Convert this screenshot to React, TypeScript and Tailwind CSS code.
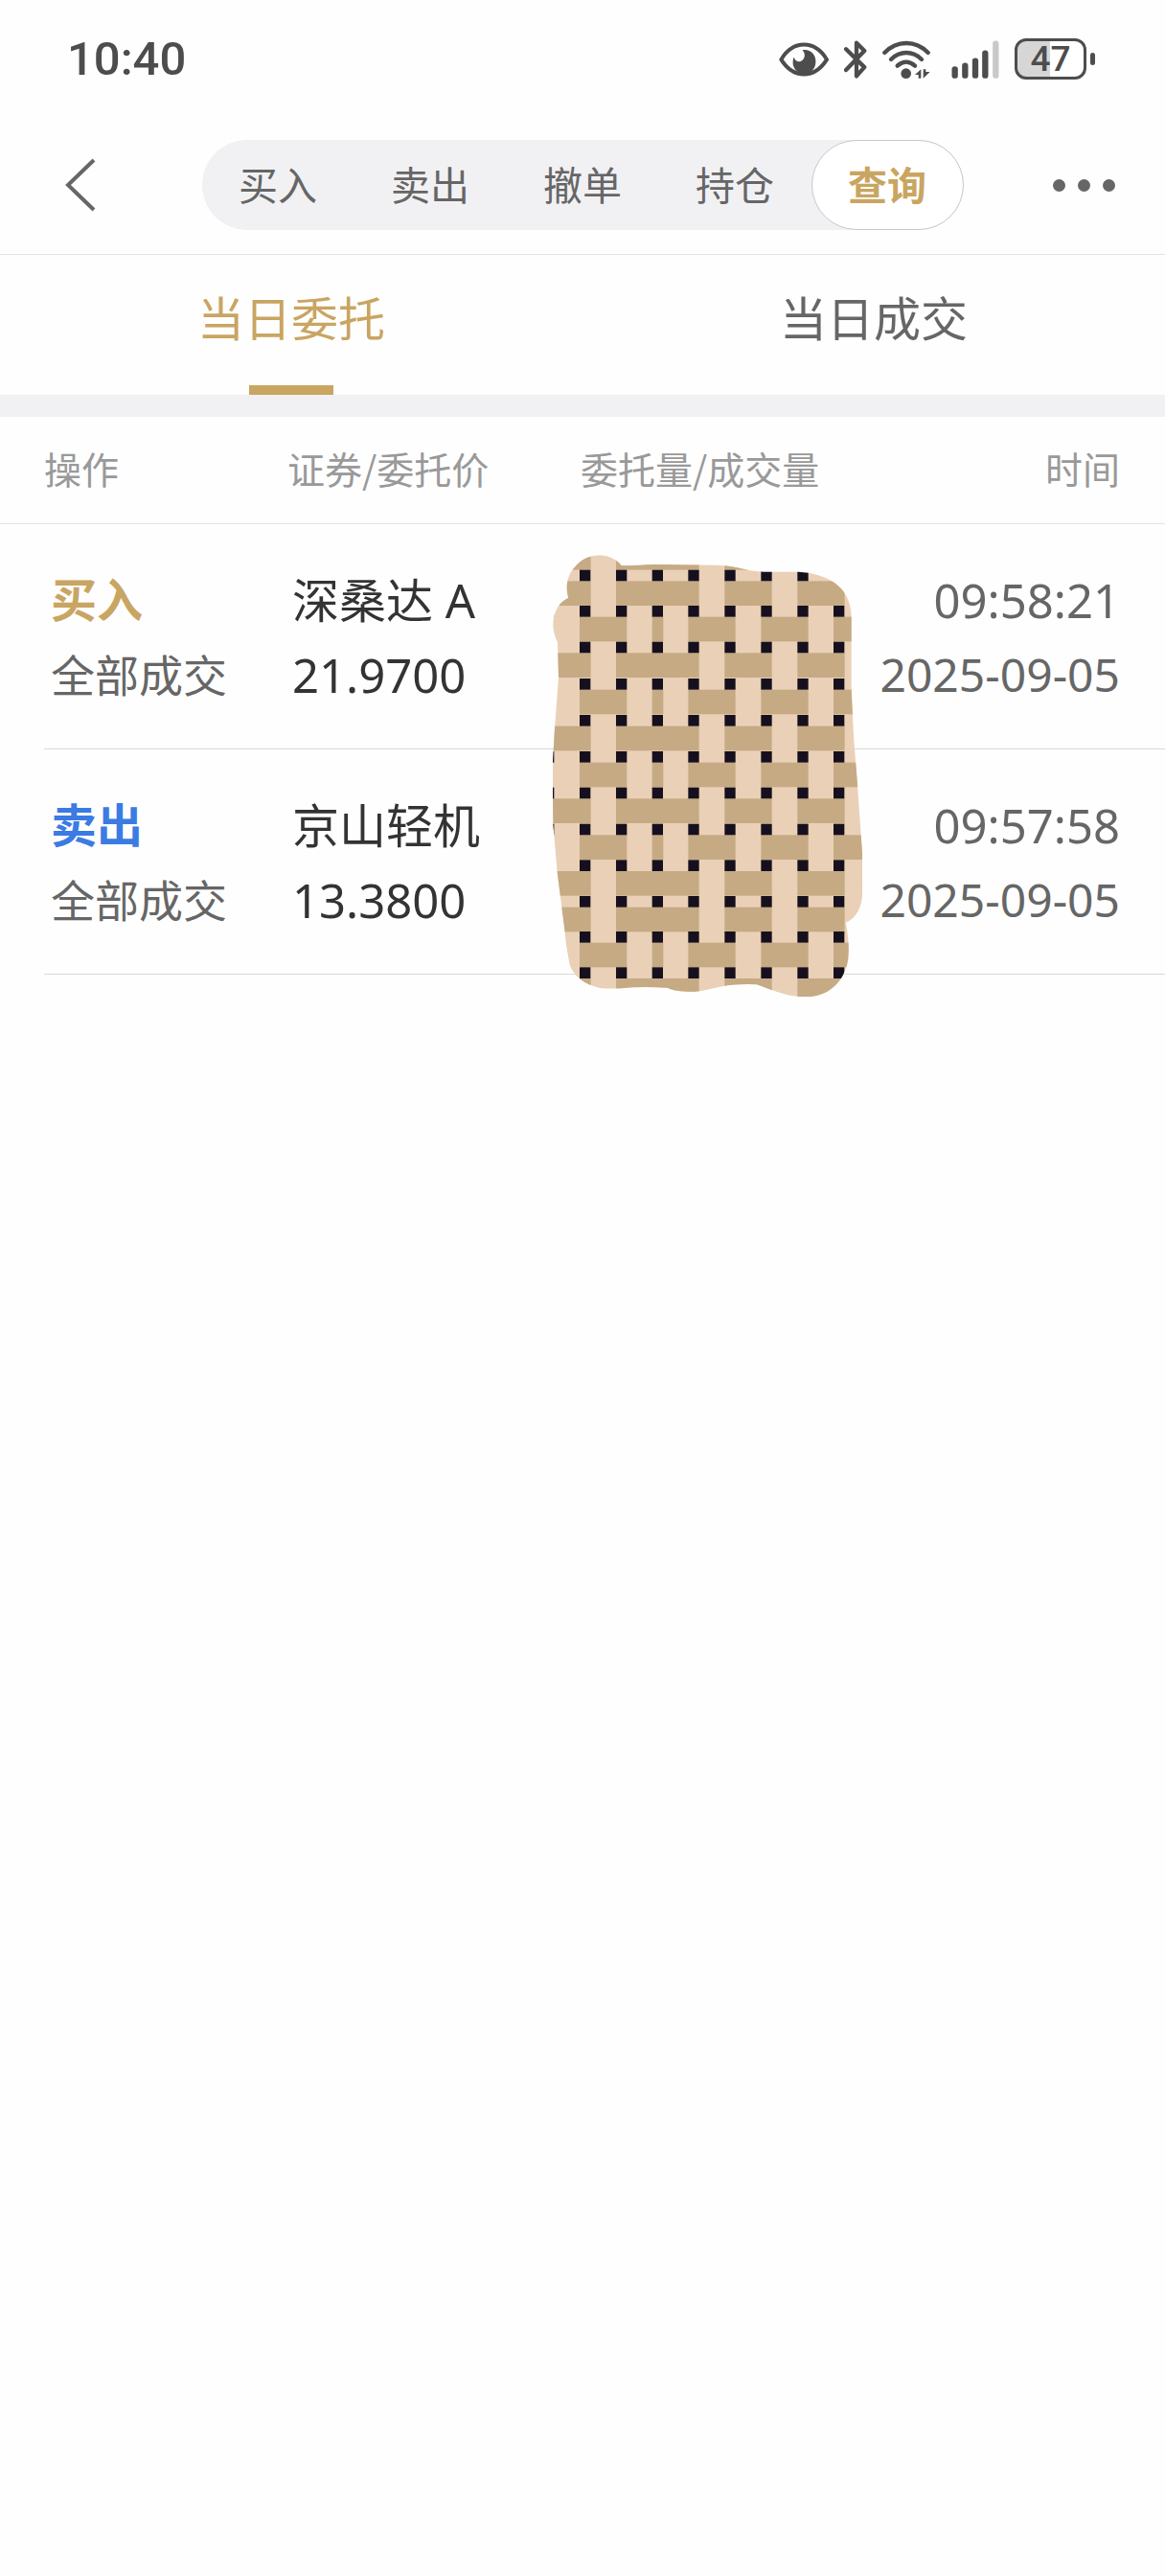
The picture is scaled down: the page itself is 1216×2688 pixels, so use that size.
import React from "react";

const ACTIONS = ["买入", "卖出", "撤单", "持仓", "查询"];

const TABS = ["当日委托", "当日成交"];

const ORDERS = [
  {
    id: 0,
    side: "买入",
    sideColor: "text-[#c9a562]",
    status: "全部成交",
    name: "深桑达 A",
    price: "21.9700",
    time: "09:58:21",
    date: "2025-09-05",
  },
  {
    id: 1,
    side: "卖出",
    sideColor: "text-[#3b7be3]",
    status: "全部成交",
    name: "京山轻机",
    price: "13.3800",
    time: "09:57:58",
    date: "2025-09-05",
  },
];

// y of the horizontal strips, and which of the two weaves each one follows
const STRIPS = [
  { y: 50, even: true },
  { y: 139, even: true },
  { y: 251, even: false },
  { y: 364, even: true },
  { y: 479, even: false },
  { y: 593, even: true },
  { y: 707, even: false },
  { y: 820, even: true },
  { y: 934, even: false },
  { y: 1047, even: true },
  { y: 1160, even: true },
  { y: 1271, even: false },
  { y: 1383, even: true },
];
const EVEN = [[40, 130], [249, 260], [589, 148], [817, 148]];
const ODD = [[135, 148], [362, 35], [475, 148], [703, 148], [930, 148]];
const KNOT_X = [21, 135, 249, 362, 475, 589, 703, 817, 930];

function Weave() {
  return (
    <svg
      className="pointer-events-none absolute left-[-29px] top-[32px] z-10 h-[461px] w-[324px]"
      viewBox="51 57 972 1383"
      aria-hidden="true"
    >
      <clipPath id="weave-edge">
        <path d="M100 192C90 160 95 120 120 95C140 70 170 58 200 58C230 60 255 75 265 90C300 92 330 88 370 87L560 89C630 91 650 108 710 110L820 110C900 114 985 150 986 250L986 480L994 640L1003 750L1020 990L1021 1110C1020 1160 1002 1195 968 1208C974 1230 978 1270 977 1300C978 1380 920 1440 850 1440C790 1444 740 1420 690 1402Q650 1400 600 1404C540 1416 520 1424 490 1424C450 1424 425 1420 410 1412Q350 1409 300 1411Q240 1417 200 1413C150 1404 108 1370 102 1330Q92 1280 88 1230L65 1050L52 900L50 720L57 600L69 440L66 330C50 300 48 270 58 240C66 215 82 200 100 192Z" />
      </clipPath>
      <g clipPath="url(#weave-edge)">
        <rect x="40" y="40" width="1000" height="1420" fill="#ead0b6" />
        {STRIPS.map((strip) =>
          (strip.even ? EVEN : ODD).map(([x, width]) => (
            <rect
              key={`${strip.y}-${x}`}
              x={x}
              y={strip.y}
              width={width}
              height={strip.y === 50 ? 54 : 77}
              fill="#c5aa84"
            />
          ))
        )}
        {STRIPS.slice(1).map((strip) =>
          KNOT_X.map((x) => (
            <rect
              key={`${strip.y}-${x}`}
              x={x}
              y={strip.y - 35}
              width="34"
              height="35"
              fill="#16101e"
            />
          ))
        )}
      </g>
    </svg>
  );
}

function StatusBar() {
  return (
    <div className="flex h-[121px] items-center justify-between pl-[70px] pr-[73px] pt-[2px] text-[#4d4d4d]">
      <span className="font-['Roboto',sans-serif] text-[49px] font-medium leading-none">
        10:40
      </span>
      <div className="flex items-center gap-4">
        <svg className="h-[36px] w-[52px]" viewBox="98 70 157 107" aria-hidden="true">
          <path
            d="M105 124C122 96 146 77 177 77C208 77 232 96 249 124C232 151 208 170 177 170C146 170 122 151 105 124Z"
            fill="none"
            stroke="currentColor"
            strokeWidth="12"
            strokeLinejoin="round"
          />
          <path
            d="M172 94C196 90 214 106 214 130C214 153 198 168 178 168C157 168 142 152 142 133Q142 123 145 117C150 130 160 133 168 129C181 122 183 105 172 94Z"
            fill="currentColor"
          />
        </svg>
        <svg className="h-[40px] w-[24px]" viewBox="303 62 72 121" aria-hidden="true">
          <path
            d="M309 90L367 147L342 175V70L367 95L309 156"
            fill="none"
            stroke="currentColor"
            strokeWidth="13"
            strokeLinecap="round"
            strokeLinejoin="round"
          />
        </svg>
        <svg className="h-[40px] w-[50px]" viewBox="422 62 150 120" aria-hidden="true">
          <g fill="none" stroke="currentColor" strokeWidth="13" strokeLinecap="round">
            <path d="M429 101C468 61 526 61 565 101" />
            <path d="M449 122C477 94 517 94 545 122" />
            <path d="M469 142C486 126 507 126 524 142" />
          </g>
          <circle cx="496" cy="166" r="16" fill="currentColor" />
          <path d="M543 153V181H535V170H524Z" fill="currentColor" />
          <path d="M550 181V153H558V161H571Z" fill="currentColor" />
        </svg>
        <svg className="ml-[6px] h-[40px] w-[50px]" viewBox="641 62 150 120" aria-hidden="true">
          <g stroke="currentColor" strokeWidth="19" strokeLinecap="round">
            <path d="M652 153V172" />
            <path d="M684 142V172" />
            <path d="M716 127V172" />
            <path d="M747 103V172" />
            <path d="M780 73V172" stroke="#c9c9c9" />
          </g>
        </svg>
        <div className="flex items-center gap-1">
          <div className="flex h-[43px] w-[75px] items-center justify-center rounded-xl border-[3px] border-[#4d4d4d] bg-linear-to-r from-[#d6d6d6] from-50% to-white to-50% font-['Roboto',sans-serif] text-[37px] font-medium leading-none">
            47
          </div>
          <div className="h-[13px] w-[5px] rounded-full bg-[#4d4d4d]" />
        </div>
      </div>
    </div>
  );
}

export default function App() {
  return (
    <div className="min-h-screen bg-[#fefefe] font-['Noto_Sans','Noto_Sans_CJK_SC',sans-serif] text-[#666666]">
      <StatusBar />

      <nav className="grid h-[145px] grid-cols-[1fr_auto_1fr] items-center border-b border-[#e2e2e2]">
        <div className="flex pl-[66px]">
          <button type="button" aria-label="返回">
            <svg className="h-[58px] w-[35px]" viewBox="0 0 35 58" aria-hidden="true">
              <path d="M32 3L5 29L32 55" fill="none" stroke="currentColor" strokeWidth="4" />
            </svg>
          </button>
        </div>
        <div className="flex h-[94px] rounded-full bg-[#f1f1f4] font-['Noto_Sans_CJK_SC',sans-serif] text-[41px] leading-none">
          {ACTIONS.map((action) => (
            <button
              key={action}
              type="button"
              className={
                action === "查询"
                  ? "w-[159px] rounded-full border border-[#c8c8ca] bg-white pb-1 font-bold text-[#c9a562]"
                  : "w-[159px] pb-1"
              }
            >
              {action}
            </button>
          ))}
        </div>
        <div className="flex justify-end pr-[52px]">
          <button type="button" aria-label="更多" className="flex gap-[13px]">
            <span className="size-[13px] rounded-full bg-[#666666]" />
            <span className="size-[13px] rounded-full bg-[#666666]" />
            <span className="size-[13px] rounded-full bg-[#666666]" />
          </button>
        </div>
      </nav>

      <div className="grid grid-cols-2 border-b-[23px] border-[#f1f1f4]">
        {TABS.map((tab, index) => (
          <button
            key={tab}
            type="button"
            className={`flex h-[146px] flex-col items-center justify-between font-['Noto_Sans_CJK_SC',sans-serif] text-[49px] leading-[128px] ${
              index === 0 ? "text-[#c9a562]" : ""
            }`}
          >
            {tab}
            {index === 0 && <span className="h-[10px] w-[88px] bg-[#c9a562]" />}
          </button>
        ))}
      </div>

      <table className="w-full table-fixed border-collapse text-left">
        <colgroup>
          <col className="w-[300px]" />
          <col className="w-[306px]" />
          <col className="w-[280px]" />
          <col />
        </colgroup>
        <thead className="border-b border-[#e2e2e2] font-['Noto_Sans_CJK_SC',sans-serif] text-[39px] text-[#999999]">
          <tr className="h-[111px]">
            <th className="p-0 pb-1 pl-[46px] font-normal">操作</th>
            <th className="p-0 pb-1 font-normal">证券/委托价</th>
            <th className="whitespace-nowrap p-0 pb-1 font-normal">委托量/成交量</th>
            <th className="p-0 pb-1 pr-[47px] text-right font-normal">时间</th>
          </tr>
        </thead>
        <tbody className="whitespace-nowrap leading-[78px]">
          {ORDERS.map((order, index) => (
            <tr key={order.id}>
              <td className="p-0 pl-[46px]">
                <div className="h-[235px] border-b border-[#d5dbdb] pl-[7px] pt-10">
                  <div className={`text-[48px] font-bold ${order.sideColor}`}>{order.side}</div>
                  <div className="text-[46px]">{order.status}</div>
                </div>
              </td>
              <td className="p-0">
                <div className="h-[235px] border-b border-[#d5dbdb] pl-[5px] pt-10 text-[49px] text-[#333333]">
                  <div>{order.name}</div>
                  <div>{order.price}</div>
                </div>
              </td>
              <td className="p-0">
                <div className="relative h-[235px] border-b border-[#d5dbdb]">
                  {index === 0 && <Weave />}
                </div>
              </td>
              <td className="p-0">
                <div className="flex h-[235px] flex-col items-end border-b border-[#d5dbdb] pr-[47px] pt-10">
                  <div className="text-[49px]">{order.time}</div>
                  <div className="text-[48px]">{order.date}</div>
                </div>
              </td>
            </tr>
          ))}
        </tbody>
      </table>
    </div>
  );
}
